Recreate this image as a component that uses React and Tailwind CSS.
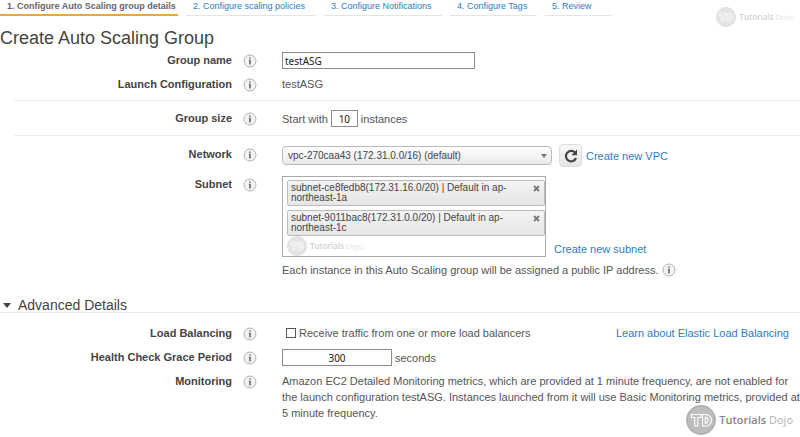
import { useState } from "react";

const TABS = [
  { label: "1. Configure Auto Scaling group details", width: "w-[178px]" },
  { label: "2. Configure scaling policies", width: "w-[130px]" },
  { label: "3. Configure Notifications", width: "w-[118px]" },
  { label: "4. Configure Tags", width: "w-[87px]" },
  { label: "5. Review", width: "w-[67px]" },
];

const SUBNETS = [
  "subnet-ce8fedb8(172.31.16.0/20) | Default in ap-northeast-1a",
  "subnet-9011bac8(172.31.0.0/20) | Default in ap-northeast-1c",
];

const linkStyle = "text-[#2f7cc0] hover:underline";
const inputStyle = "border border-[#8c8c8c] bg-white text-[#222] outline-none font-['Noto_Sans',sans-serif] text-[10px]";

function InfoIcon() {
  return (
    <svg viewBox="0 0 14 14" className="w-[14px] h-[14px] shrink-0" aria-hidden="true">
      <circle cx="7" cy="7" r="6" fill="#f2f2f2" stroke="#b4b4b4" />
      <path d="M6.2 3.4h1.6v1.4H6.2zM5.8 5.7h2v4.9H6.2V6.6h-.4z" fill="#666" />
    </svg>
  );
}

function Watermark({ className = "", large = false }) {
  return (
    <div className={`flex items-center gap-[3px] select-none whitespace-nowrap font-['Open_Sans',sans-serif] ${large ? "text-[11px]" : "text-[8px]"} ${className}`}>
      <svg viewBox="0 0 30 30" className={large ? "w-[30px] h-[30px]" : "w-[20px] h-[20px]"} aria-hidden="true">
        <circle cx="15" cy="15" r="15" fill={large ? "#bdbdbd" : "#e4e4e4"} />
        <circle cx="15" cy="15" r="13.8" fill="none" stroke={large ? "#b0b0b0" : "#dedede"} strokeWidth="1.2" />
        <path d="M5.5 9.5h9.5v3h-3.2v8.5H8.7v-8.5H5.5zM16.5 9.5h3.2a5.7 5.75 0 0 1 0 11.5h-3.2zM19.2 12.4v5.7a2.85 2.85 0 0 0 0-5.7z" fill={large ? "#bdbdbd" : "#e4e4e4"} stroke="#fff" strokeWidth="1.1" />
      </svg>
      <span className={large ? "text-[#858585] font-semibold" : "text-[#d2d2d2] font-semibold"}>
        Tutorials <span className={large ? "text-[#b0b0b0] font-normal" : "text-[#e6e6e6] font-normal"}>Dojo</span>
      </span>
    </div>
  );
}

function Row({ label, htmlFor, className = "", children }) {
  return (
    <div className={`flex items-start ${className}`}>
      <label htmlFor={htmlFor} className="w-[232px] shrink-0 text-right font-bold text-[#444] leading-4">{label}</label>
      <span className="w-[50px] shrink-0 pl-[11px] pt-[2px]"><InfoIcon /></span>
      <div className="flex-1 min-w-0">{children}</div>
    </div>
  );
}

export default function App() {
  const [name, setName] = useState("testASG");
  const [size, setSize] = useState("10");
  const [grace, setGrace] = useState("300");
  const [balanced, setBalanced] = useState(false);
  const [subnets, setSubnets] = useState(SUBNETS);

  return (
    <div className="relative min-h-screen overflow-hidden bg-white text-[#555] text-[11px] leading-4 font-['Liberation_Sans',Arial,sans-serif]">
      {/* Wizard steps */}
      <nav className="flex gap-2 text-[9px] leading-[12px]">
        {TABS.map((t, i) => (
          <a
            key={t.label}
            href="#"
            className={`${t.width} h-4 shrink-0 pl-[7px] whitespace-nowrap ${i === 0 ? "border-b-2 border-[#f5a33b] text-[#666] font-bold" : "border-b border-[#e4e4e4] text-[#2f7cc0]"}`}
          >
            {t.label}
          </a>
        ))}
      </nav>
      <Watermark className="absolute right-[7px] top-[7px]" />

      <h1 className="mt-[11px] text-[18px] leading-[22px] text-[#444]">Create Auto Scaling Group</h1>

      <form onSubmit={e => e.preventDefault()}>
        <Row label="Group name" htmlFor="name" className="pt-[3px]">
          <input id="name" value={name} onChange={e => setName(e.target.value)} className={`${inputStyle} block w-[193px] h-[17px] px-[2px]`} />
        </Row>
        <Row label="Launch Configuration" className="mt-[7px]">testASG</Row>

        <div className="ml-3.5 mt-2 border-t border-[#eee]" />

        <Row label="Group size" htmlFor="size" className="mt-[9px]">
          <div className="flex items-center gap-[3px]">
            Start with
            <input id="size" value={size} onChange={e => setSize(e.target.value)} className={`${inputStyle} w-[27px] h-[17px] text-center`} />
            instances
          </div>
        </Row>

        <div className="ml-3.5 mt-2 border-t border-[#eee]" />

        <Row label="Network" htmlFor="network" className="mt-[10px]">
          <div className="flex items-center">
            <div className="relative w-[270px]">
              <select id="network" className="block w-full h-[19px] appearance-none rounded border border-[#bbb] bg-linear-to-b from-white to-[#e9e9e9] pl-[5px] text-[10px] text-[#444] outline-none">
                <option>vpc-270caa43 (172.31.0.0/16) (default)</option>
              </select>
              <svg viewBox="0 0 6 4" className="pointer-events-none absolute right-[5px] top-2 w-1.5 h-1" aria-hidden="true">
                <path d="M0 0h6L3 4z" fill="#777" />
              </svg>
            </div>
            <button type="button" aria-label="Refresh" className="ml-[7px] -my-1 flex h-[23px] w-[23px] items-center justify-center rounded border border-[#ddd] bg-linear-to-b from-[#f8f8f8] to-[#e6e6e6]">
              <svg viewBox="0 0 14 14" className="w-[14px] h-[14px]" aria-hidden="true">
                <path d="M11 3.6A5.2 5.2 0 1 0 12 9" fill="none" stroke="#444" strokeWidth="2.2" />
                <path d="M13 .6v5.6H7.4z" fill="#444" />
              </svg>
            </button>
            <a href="#" className={`${linkStyle} ml-1`}>Create new VPC</a>
          </div>
        </Row>

        <Row label="Subnet" className="mt-[11px]">
          <div className="flex items-end gap-2">
            <div className="w-[264px] border border-[#aaa] pl-1 pt-[3px]">
              <ul className="flex flex-col gap-1">
                {subnets.map(s => (
                  <li key={s} className="flex items-start justify-between rounded-[2px] border border-[#bbb] bg-linear-to-b from-[#f3f3f3] to-[#e6e6e6] pl-[3px] pr-1 py-[2px] text-[10px] leading-[10px] text-[#444]">
                    <span className="w-[230px]">{s}</span>
                    <button type="button" aria-label={`Remove ${s}`} onClick={() => setSubnets(subnets.filter(x => x !== s))}>
                      <svg viewBox="0 0 7 7" className="mt-[2px] w-[7px] h-[7px]" aria-hidden="true">
                        <path d="M1 1l5 5M6 1L1 6" stroke="#777" strokeWidth="1.8" />
                      </svg>
                    </button>
                  </li>
                ))}
              </ul>
              <Watermark />
            </div>
            <a href="#" className={linkStyle}>Create new subnet</a>
          </div>
          <p className="mt-[5px] flex items-center gap-1">
            Each instance in this Auto Scaling group will be assigned a public IP address. <InfoIcon />
          </p>
        </Row>

        <h2 className="mt-5 flex items-center border-b border-[#e6e6e6] pl-[3px] text-[14px] leading-[14px] text-[#444]">
          <svg viewBox="0 0 8 5" className="mr-[7px] w-2 h-[5px]" aria-hidden="true">
            <path d="M0 0h8L4 5z" fill="#444" />
          </svg>
          Advanced Details
        </h2>

        <Row label="Load Balancing" className="mt-3">
          <div className="flex items-center justify-between pr-[11px]">
            <label className="flex items-center gap-[3px]">
              <input type="checkbox" checked={balanced} onChange={e => setBalanced(e.target.checked)} className="ml-1 w-[10px] h-[10px] appearance-none border border-[#555] bg-white checked:bg-[#555]" />
              Receive traffic from one or more load balancers
            </label>
            <a href="#" className={linkStyle}>Learn about Elastic Load Balancing</a>
          </div>
        </Row>
        <Row label="Health Check Grace Period" htmlFor="grace" className="mt-2">
          <div className="flex items-center gap-[3px]">
            <input id="grace" value={grace} onChange={e => setGrace(e.target.value)} className={`${inputStyle} w-[110px] h-[17px] text-center`} />
            seconds
          </div>
        </Row>
        <Row label="Monitoring" className="mt-[7px]">
          <p>
            Amazon EC2 Detailed Monitoring metrics, which are provided at 1 minute frequency, are not enabled for <br />
            the launch configuration testASG. Instances launched from it will use Basic Monitoring metrics, provided at <br />
            5 minute frequency.
          </p>
        </Row>
      </form>

      <Watermark large className="absolute right-[7px] bottom-[2px]" />
    </div>
  );
}
